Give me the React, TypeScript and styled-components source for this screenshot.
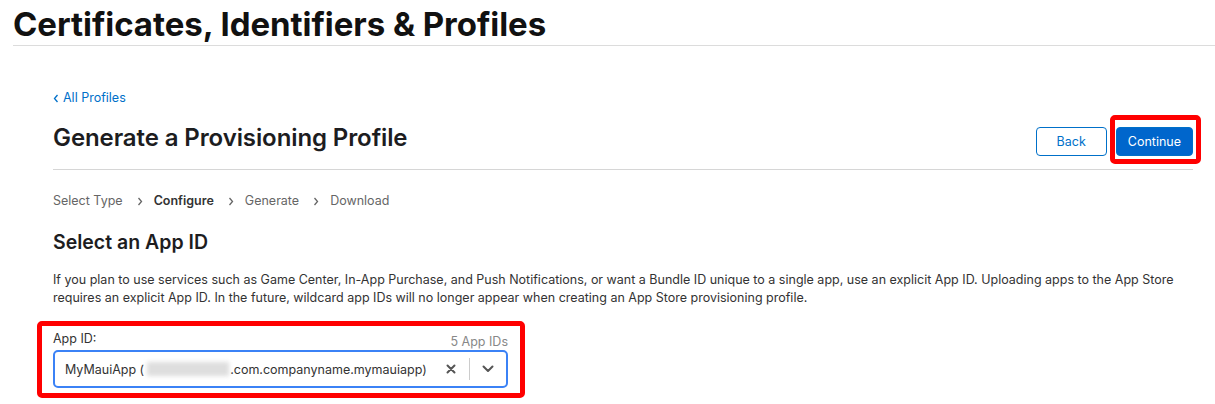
import React from "react";
import styled, { createGlobalStyle } from "styled-components";

const Global = createGlobalStyle`
  html, body { margin: 0; padding: 0; background: #fff; }
  body { font-family: Inter, "Noto Sans", "Liberation Sans", sans-serif; color: #1d1d1f; -webkit-font-smoothing: antialiased; }
  * { box-sizing: border-box; }
`;

const Page = styled.div`
  width: 1215px;
  height: 404px;
  overflow: hidden;
`;

const TopHeader = styled.header`
  margin-left: 13px;
  height: 46px;
  border-bottom: 1px solid #dcdcdc;
  display: flex;
  align-items: flex-start;
`;

const PageTitle = styled.h1`
  margin: 0;
  padding-top: 4px;
  font-size: 33px;
  line-height: 40px;
  font-weight: 700;
  letter-spacing: -0.05px;
  color: #111;
`;

const Content = styled.main`
  padding: 0 22px 0 53px;
  display: flex;
  flex-direction: column;
`;

const BackLink = styled.a`
  margin-top: 44px;
  font-size: 12.5px;
  line-height: 16px;
  color: #0070c9;
  text-decoration: none;
  display: flex;
  align-items: center;
  gap: 4px;
`;

const TitleRow = styled.div`
  display: flex;
  align-items: center;
  justify-content: space-between;
  height: 38px;
  margin-top: 16px;
`;

const Heading = styled.h2`
  margin: 0 0 8px 0;
  font-size: 24px;
  font-weight: 600;
  letter-spacing: -0.1px;
  color: #1d1d1f;
`;

const Actions = styled.div`
  display: flex;
  gap: 9px;
  align-items: center;
`;

const Button = styled.button<{ $primary?: boolean }>`
  position: relative;
  height: 29px;
  padding: 0 ${(p) => (p.$primary ? "11px" : "20px")};
  border-radius: 4px;
  font-family: inherit;
  font-size: 12.5px;
  border: 1px solid #0070c9;
  background: ${(p) => (p.$primary ? "#0066cc" : "#fff")};
  color: ${(p) => (p.$primary ? "#fff" : "#0070c9")};
  cursor: pointer;
`;

const Highlight = styled.span<{ $t: number; $r: number; $b: number; $l: number }>`
  position: absolute;
  top: ${(p) => p.$t}px;
  right: ${(p) => p.$r}px;
  bottom: ${(p) => p.$b}px;
  left: ${(p) => p.$l}px;
  border: 5px solid #ff0000;
  border-radius: 5px;
  pointer-events: none;
`;

const Divider = styled.hr`
  margin: 9px 0 0 0;
  border: none;
  border-top: 1px solid #d6d6d6;
`;

const Steps = styled.ol`
  list-style: none;
  margin: 23px 0 0 0;
  padding: 0;
  display: flex;
  align-items: center;
  font-size: 12.5px;
  line-height: 16px;
  color: #666;
`;

const Step = styled.li<{ $active?: boolean }>`
  font-weight: ${(p) => (p.$active ? 600 : 400)};
  color: ${(p) => (p.$active ? "#333" : "#666")};
  display: flex;
  align-items: center;
`;

const Sep = styled.span`
  margin: 0 11px 0 14px;
  display: flex;
  align-items: center;
`;

const SectionTitle = styled.h3`
  margin: 21px 0 0 0;
  font-size: 19.5px;
  line-height: 24px;
  font-weight: 600;
  color: #1d1d1f;
`;

const Paragraph = styled.p`
  margin: 17px 0 0 0;
  font-size: 12.5px;
  line-height: 18px;
  color: #333;
  max-width: 1140px;
`;

const FieldGroup = styled.div`
  position: relative;
  width: 455px;
  margin-top: 24px;
`;

const FieldHeader = styled.div`
  display: flex;
  justify-content: space-between;
  align-items: flex-end;
  font-size: 12.5px;
  line-height: 16px;
`;

const Label = styled.label`
  color: #333;
`;

const Count = styled.span`
  color: #888;
  position: relative;
  top: 3px;
`;

const Select = styled.div`
  margin-top: 3px;
  height: 38px;
  border: 2px solid #3b82f6;
  border-radius: 5px;
  display: flex;
  align-items: center;
  padding-left: 10px;
  font-size: 12.5px;
  color: #333;
`;

const Value = styled.div`
  flex: 1;
  display: flex;
  align-items: center;
  white-space: nowrap;
`;

const Redacted = styled.span`
  display: inline-block;
  width: 82px;
  height: 14px;
  background: #dedede;
  filter: blur(2px);
  margin: 0 1px 0 3px;
`;

const Controls = styled.div`
  display: flex;
  align-items: center;
  height: 100%;
`;

const IconBox = styled.span`
  width: 36px;
  display: flex;
  justify-content: center;
  align-items: center;
`;

const VSep = styled.span`
  width: 1px;
  height: 22px;
  background: #ccc;
`;

const Chevron = ({ dir, color }: { dir: "left" | "right"; color: string }) => (
  <svg width="6" height="9" viewBox="0 0 6 9">
    <path
      d={dir === "left" ? "M4.5 1 L1.5 4.5 L4.5 8" : "M1.5 1 L4.5 4.5 L1.5 8"}
      fill="none"
      stroke={color}
      strokeWidth="1.3"
    />
  </svg>
);

export default function App() {
  const steps = ["Select Type", "Configure", "Generate", "Download"];
  return (
    <Page>
      <Global />
      <TopHeader>
        <PageTitle>Certificates, Identifiers &amp; Profiles</PageTitle>
      </TopHeader>
      <Content>
        <BackLink href="#">
          <Chevron dir="left" color="#0070c9" />
          All Profiles
        </BackLink>
        <TitleRow>
          <Heading>Generate a Provisioning Profile</Heading>
          <Actions>
            <Button>Back</Button>
            <Button $primary>
              Continue
              <Highlight $t={-13} $r={-9} $b={-9} $l={-7} />
            </Button>
          </Actions>
        </TitleRow>
        <Divider />
        <Steps>
          {steps.map((s, i) => (
            <React.Fragment key={s}>
              {i > 0 && (
                <Sep>
                  <Chevron dir="right" color="#666" />
                </Sep>
              )}
              <Step $active={s === "Configure"}>{s}</Step>
            </React.Fragment>
          ))}
        </Steps>
        <SectionTitle>Select an App ID</SectionTitle>
        <Paragraph>
          If you plan to use services such as Game Center, In-App Purchase, and Push Notifications, or want a Bundle ID unique to a single app, use an explicit App ID. Uploading apps to the App Store requires an explicit App ID. In the future, wildcard app IDs will no longer appear when creating an App Store provisioning profile.
        </Paragraph>
        <FieldGroup>
          <Highlight $t={-10} $r={-17} $b={-10} $l={-16} />
          <FieldHeader>
            <Label>App ID:</Label>
            <Count>5 App IDs</Count>
          </FieldHeader>
          <Select>
            <Value>
              MyMauiApp (<Redacted />.com.companyname.mymauiapp)
            </Value>
            <Controls>
              <IconBox>
                <svg width="10" height="10" viewBox="0 0 10 10">
                  <path d="M1.5 1.5 L8.5 8.5 M8.5 1.5 L1.5 8.5" stroke="#555" strokeWidth="2" strokeLinecap="round" />
                </svg>
              </IconBox>
              <VSep />
              <IconBox>
                <svg width="12" height="8" viewBox="0 0 12 8">
                  <path d="M1.5 1.5 L6 6 L10.5 1.5" fill="none" stroke="#555" strokeWidth="2" strokeLinecap="round" strokeLinejoin="round" />
                </svg>
              </IconBox>
            </Controls>
          </Select>
        </FieldGroup>
      </Content>
    </Page>
  );
}
